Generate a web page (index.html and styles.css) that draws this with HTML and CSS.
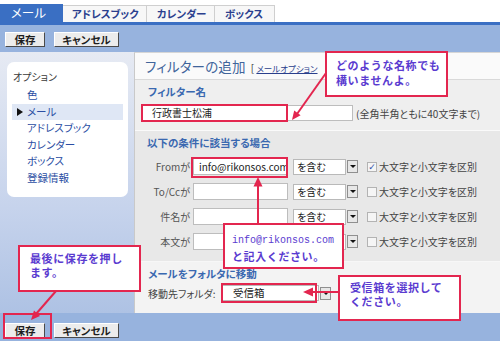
FILE: index.html
```html
<!DOCTYPE html>
<html lang="ja">
<head>
<meta charset="utf-8">
<title>フィルターの追加</title>
<link rel="stylesheet" href="styles.css">
</head>
<body>
<div class="page">
  <div class="tabs">
    <div class="tab active">メール</div>
    <div class="tab t-addr">アドレスブック</div>
    <div class="tab t-cal">カレンダー</div>
    <div class="tab t-box">ボックス</div>
  </div>
  <div class="tabline"></div>
  <div class="toolbar top">
    <span class="btn b-save">保存</span>
    <span class="btn b-cancel">キャンセル</span>
  </div>

  <div class="main">
    <aside class="side">
      <div class="sidepanel">
        <div class="side-title">オプション</div>
        <ul class="side-list">
          <li>色</li>
          <li class="cur">メール</li>
          <li>アドレスブック</li>
          <li>カレンダー</li>
          <li>ボックス</li>
          <li>登録情報</li>
        </ul>
      </div>
    </aside>

    <section class="content">
      <div class="head">
        <h1>フィルターの追加</h1>
        <span class="bracket">[ <span class="link">メールオプション</span></span>
      </div>

      <div class="sec name-sec">
        <h2>フィルター名</h2>
        <div class="name-row">
          <div class="input name-input">行政書士松浦</div>
          <span class="note">(全角半角ともに40文字まで)</span>
        </div>
      </div>

      <div class="sec cond-sec">
        <h2>以下の条件に該当する場合</h2>
        <div class="crow">
          <span class="clabel">Fromが</span>
          <div class="input cinput">info@rikonsos.com</div>
          <div class="select"><span class="selbox">を含む</span><span class="selbtn"></span></div>
          <span class="check checked">✓</span>
          <span class="chklabel">大文字と小文字を区別</span>
        </div>
        <div class="crow">
          <span class="clabel">To/Ccが</span>
          <div class="input cinput"></div>
          <div class="select"><span class="selbox">を含む</span><span class="selbtn"></span></div>
          <span class="check"></span>
          <span class="chklabel">大文字と小文字を区別</span>
        </div>
        <div class="crow">
          <span class="clabel">件名が</span>
          <div class="input cinput"></div>
          <div class="select"><span class="selbox">を含む</span><span class="selbtn"></span></div>
          <span class="check"></span>
          <span class="chklabel">大文字と小文字を区別</span>
        </div>
        <div class="crow">
          <span class="clabel">本文が</span>
          <div class="input cinput"></div>
          <div class="select"><span class="selbox">を含む</span><span class="selbtn"></span></div>
          <span class="check"></span>
          <span class="chklabel">大文字と小文字を区別</span>
        </div>
      </div>

      <div class="sec move-sec">
        <h2>メールをフォルタに移動</h2>
        <div class="move-row">
          <span class="mlabel">移動先フォルダ:</span>
          <div class="select mselect"><span class="selbox">受信箱</span><span class="selbtn"></span></div>
        </div>
      </div>
    </section>
  </div>

  <div class="toolbar bottom">
    <span class="btn b-save">保存</span>
    <span class="btn b-cancel">キャンセル</span>
  </div>

  <div class="overlay">
    <div class="hl hl-name"></div>
    <div class="hl hl-from"></div>
    <div class="hl hl-inbox"></div>
    <div class="hl hl-save"></div>

    <svg class="arrows" width="500" height="341" viewBox="0 0 500 341">
      <g stroke="#e3264f" stroke-width="2" fill="none">
        <line x1="326" y1="73" x2="297" y2="114"/>
        <line x1="258" y1="223" x2="258" y2="185"/>
        <line x1="339" y1="292" x2="312" y2="292"/>
        <line x1="56" y1="291" x2="36" y2="314"/>
      </g>
      <g fill="#e3264f">
        <polygon points="292,120 300.6,115.2 294.2,110.4"/>
        <polygon points="258,177 253.5,186.5 262.5,186.5"/>
        <polygon points="303,292 313,287.5 313,296.5"/>
        <polygon points="31,320 40,316 34,310.5"/>
      </g>
    </svg>

    <div class="callout c-name">どのような名称でも<br>構いませんよ。</div>
    <div class="callout c-info"><span class="mono">info@rikonsos.com</span><br>と記入ください。</div>
    <div class="callout c-save">最後に保存を押し<br>ます。</div>
    <div class="callout c-inbox">受信箱を選択して<br>ください。</div>
  </div>
</div>
</body>
</html>
```

FILE: styles.css
```css
* { box-sizing: border-box; }

html, body {
  margin: 0;
  padding: 0;
}

body {
  width: 500px;
  height: 341px;
  overflow: hidden;
  font-family: "Noto Sans CJK JP", "Noto Sans", sans-serif;
  font-feature-settings: "palt" 1;
  font-size: 10px;
  color: #333;
  background: #fff;
}

.page {
  position: relative;
  width: 500px;
  height: 341px;
  display: flex;
  flex-direction: column;
}

/* ---------- tabs ---------- */
.tabs {
  height: 22px;
  display: flex;
  align-items: flex-end;
  background: #fff;
}

.tab {
  height: 17px;
  line-height: 16px;
  padding-left: 9px;
  font-size: 10.5px;
  font-weight: bold;
  color: #2b3f8e;
  background: #f7f7f7;
  border: 1px solid #cfcfcf;
  border-bottom: none;
  border-left: none;
}

.tab.active {
  width: 63px;
  height: 18px;
  line-height: 18px;
  padding-left: 11px;
  font-size: 12.5px;
  font-weight: normal;
  color: #fff;
  background: #3a6fc3;
  border: none;
}

.t-addr { width: 84px; }
.t-cal { width: 68px; padding-left: 10px; }
.t-box { width: 60px; padding-left: 10px; }

.tabline {
  height: 3px;
  background: #3a6fc3;
}

/* ---------- toolbars ---------- */
.toolbar {
  display: flex;
  align-items: flex-start;
  gap: 9px;
  padding-left: 5px;
  background: #97b3de;
}

.toolbar.top {
  height: 27px;
  padding-top: 7px;
}

.toolbar.bottom {
  height: 28px;
  padding-top: 10px;
}

.btn {
  height: 15px;
  line-height: 13px;
  font-size: 10.5px;
  font-weight: bold;
  color: #1d1d1d;
  text-align: center;
  background: #ececec;
  border: 1px solid;
  border-color: #fff #4a4a4a #4a4a4a #fff;
}

.b-save { width: 40px; }
.b-cancel { width: 65px; }

/* ---------- main ---------- */
.main {
  height: 261px;
  display: flex;
}

.side {
  width: 134px;
  padding: 10px 6px 0 7px;
  background: linear-gradient(#e6eaf3, #c6d3ec 60%, #aec2e4);
}

.sidepanel {
  height: 135px;
  background: #fff;
  border-radius: 7px;
  padding: 7px 5px 0 5px;
}

.side-title {
  height: 16px;
  line-height: 16px;
  padding-left: 1px;
  color: #3a3a3a;
  font-size: 10px;
}

.side-list {
  list-style: none;
  margin: 2px 0 0 0;
  padding: 0;
}

.side-list li {
  height: 16.6px;
  line-height: 16.6px;
  padding-left: 15px;
  font-size: 10.5px;
  color: #2b4ea3;
  position: relative;
}

.side-list li.cur {
  background: #dfe7f5;
}

.side-list li.cur::before {
  content: "";
  position: absolute;
  left: 5px;
  top: 4.5px;
  border-left: 6px solid #111;
  border-top: 4px solid transparent;
  border-bottom: 4px solid transparent;
}

/* ---------- content ---------- */
.content {
  flex: 1;
  display: flex;
  flex-direction: column;
  border-left: 1px solid #c9c9c9;
  border-top: 1px solid #d6d6d6;
  background: #efefef;
}

.head {
  height: 27px;
  display: flex;
  align-items: center;
  gap: 5px;
  padding-left: 10px;
  background: #fafafa;
  border-bottom: 1px solid #d9d9d9;
}

.head h1 {
  margin: 0;
  font-size: 13.5px;
  font-weight: normal;
  color: #40649a;
  letter-spacing: 0.2px;
}

.bracket {
  font-size: 10px;
  color: #333;
  padding-top: 2px;
}

.link {
  font-size: 8.5px;
  color: #2a3f8c;
  text-decoration: underline;
}

.sec h2 {
  margin: 0;
  font-size: 10.5px;
  font-weight: bold;
  color: #3a68b0;
  line-height: 14px;
}

.name-sec {
  height: 51px;
  padding: 5px 0 0 13px;
  background: #efefef;
  border-bottom: 1px solid #fafafa;
}

.name-row {
  display: flex;
  align-items: center;
  gap: 3px;
  margin: 6px 0 0 -6px;
}

.input {
  height: 17px;
  line-height: 15px;
  background: #fff;
  border: 1px solid #bdbdbd;
  font-size: 10px;
  color: #222;
  padding-left: 9px;
  overflow: hidden;
  white-space: nowrap;
}

.name-input {
  width: 211px;
  height: 16px;
  line-height: 14px;
}

.note {
  font-size: 10px;
  color: #444;
}

.cond-sec {
  height: 131px;
  padding: 5px 0 0 12px;
  background: #e8e8e8;
  border-bottom: 1px solid #f7f7f7;
}

.crow {
  height: 25px;
  display: flex;
  align-items: center;
  margin-left: -12px;
}

.cond-sec h2 {
  margin-bottom: 4px;
}

.clabel {
  width: 55px;
  text-align: right;
  font-size: 10px;
  color: #555;
}

.cinput {
  width: 95px;
  margin-left: 3px;
  padding-left: 5px;
}

.select {
  display: flex;
  align-items: center;
  margin-left: 5px;
  width: 65px;
  height: 16px;
}

.selbox {
  flex: 1;
  height: 16px;
  line-height: 14px;
  background: #fff;
  border: 1px solid #b9b9b9;
  padding-left: 3px;
  font-size: 10px;
  color: #222;
}

.selbtn {
  position: relative;
  width: 11px;
  height: 13px;
  margin-left: 1px;
  background: #e7e7e7;
  border: 1px solid #8f8f8f;
}

.selbtn::after {
  content: "";
  position: absolute;
  left: 2px;
  top: 4px;
  border-top: 3px solid #111;
  border-left: 3px solid transparent;
  border-right: 3px solid transparent;
}

.check {
  width: 10px;
  height: 10px;
  margin-left: 9px;
  background: #f5f5f5;
  border: 1px solid #b3b3b3;
  font-size: 9px;
  line-height: 8px;
  color: #3450a8;
  text-align: center;
  font-family: "DejaVu Sans", sans-serif;
}

.chklabel {
  margin-left: 2px;
  font-size: 10px;
  color: #444;
}

.move-sec {
  flex: 1;
  padding: 5px 0 0 13px;
  background: #f3f3f3;
}

.move-row {
  display: flex;
  align-items: center;
  margin-top: 4px;
}

.mlabel {
  width: 74px;
  font-size: 10px;
  color: #444;
}

.mselect {
  width: 109px;
  margin-left: 0;
}

.mselect .selbox {
  padding-left: 10px;
  font-size: 10.5px;
}

/* ---------- overlay annotations ---------- */
.overlay {
  position: absolute;
  left: 0;
  top: 0;
  width: 500px;
  height: 341px;
  pointer-events: none;
}

.arrows {
  position: absolute;
  left: 0;
  top: 0;
}

.hl {
  position: absolute;
  border: 2px solid #e3264f;
}

.hl-name { left: 141px; top: 104px; width: 147px; height: 18px; }
.hl-from { left: 191px; top: 157px; width: 97px; height: 21px; }
.hl-inbox { left: 221px; top: 283px; width: 96px; height: 20px; }
.hl-save { left: 3px; top: 313px; width: 49px; height: 26px; }

.callout {
  position: absolute;
  background: #fff;
  border: 2px solid #e3264f;
  color: #5a3bd0;
  font-weight: bold;
  font-size: 11px;
  letter-spacing: 0.6px;
  line-height: 15px;
  font-feature-settings: normal;
}

.c-name { left: 325px; top: 51px; width: 123px; height: 46px; padding: 5px 0 0 9px; }
.c-info { left: 223px; top: 223px; width: 121px; height: 46px; padding: 6px 0 0 7px; line-height: 14.5px; }
.c-save { left: 18px; top: 245px; width: 123px; height: 47px; padding: 4px 0 0 10px; line-height: 14px; }
.c-inbox { left: 338px; top: 275px; width: 123px; height: 46px; padding: 3px 0 0 10px; line-height: 14px; }

.mono {
  font-family: "Liberation Mono", "DejaVu Sans Mono", monospace;
  font-weight: normal;
  font-size: 10px;
  letter-spacing: 0;
}
```
